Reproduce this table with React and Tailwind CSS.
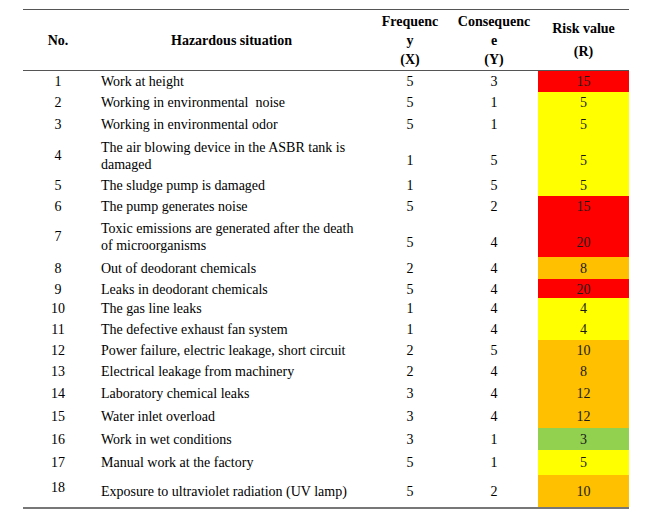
import React from 'react'

const rows = [
  { no: 1, label: ['Work at height'], x: 5, y: 3, r: 15, bg: 'bg-[#ff0000]', h: 'h-[21px]' },
  { no: 2, label: ['Working in environmental\u00a0 noise'], x: 5, y: 1, r: 5, bg: 'bg-[#ffff00]', h: 'h-[21px]' },
  { no: 3, label: ['Working in environmental odor'], x: 5, y: 1, r: 5, bg: 'bg-[#ffff00]', h: 'h-[23px]' },
  { no: 4, label: ['The air blowing device in the ASBR tank is', 'damaged'], x: 1, y: 5, r: 5, bg: 'bg-[#ffff00]', h: 'h-[39px]' },
  { no: 5, label: ['The sludge pump is damaged'], x: 1, y: 5, r: 5, bg: 'bg-[#ffff00]', h: 'h-[21px]' },
  { no: 6, label: ['The pump generates noise'], x: 5, y: 2, r: 15, bg: 'bg-[#ff0000]', h: 'h-[20px]' },
  { no: 7, label: ['Toxic emissions are generated after the death', 'of microorganisms'], x: 5, y: 4, r: 20, bg: 'bg-[#ff0000]', h: 'h-[41px]' },
  { no: 8, label: ['Out of deodorant chemicals'], x: 2, y: 4, r: 8, bg: 'bg-[#ffc000]', h: 'h-[22px]' },
  { no: 9, label: ['Leaks in deodorant chemicals'], x: 5, y: 4, r: 20, bg: 'bg-[#ff0000]', h: 'h-[19px]' },
  { no: 10, label: ['The gas line leaks'], x: 1, y: 4, r: 4, bg: 'bg-[#ffff00]', h: 'h-[21px]' },
  { no: 11, label: ['The defective exhaust fan system'], x: 1, y: 4, r: 4, bg: 'bg-[#ffff00]', h: 'h-[21px]' },
  { no: 12, label: ['Power failure, electric leakage, short circuit'], x: 2, y: 5, r: 10, bg: 'bg-[#ffc000]', h: 'h-[21px]' },
  { no: 13, label: ['Electrical leakage from machinery'], x: 2, y: 4, r: 8, bg: 'bg-[#ffc000]', h: 'h-[21px]' },
  { no: 14, label: ['Laboratory chemical leaks'], x: 3, y: 4, r: 12, bg: 'bg-[#ffc000]', h: 'h-[22px]' },
  { no: 15, label: ['Water inlet overload'], x: 3, y: 4, r: 12, bg: 'bg-[#ffc000]', h: 'h-[24px]' },
  { no: 16, label: ['Work in wet conditions'], x: 3, y: 1, r: 3, bg: 'bg-[#92d050]', h: 'h-[22px]' },
  { no: 17, label: ['Manual work at the factory'], x: 5, y: 1, r: 5, bg: 'bg-[#ffff00]', h: 'h-[25px]' },
  { no: 18, label: ['Exposure to ultraviolet radiation (UV lamp)'], x: 5, y: 2, r: 10, bg: 'bg-[#ffc000]', h: 'h-[32px]', numUp: true },
]

const cols = 'grid grid-cols-[70px_277px_80px_88px_91px]'

function Row({ row }) {
  const multi = row.label.length > 1
  const valAlign = multi ? 'items-end pb-[4px]' : 'items-center'
  return (
    <div className={`${cols} ${row.h}`}>
      <div className={`flex justify-center ${row.numUp ? 'items-center pb-[8px]' : 'items-center'}`}>{row.no}</div>
      <div className={`flex flex-col justify-center pl-[8px] ${multi ? 'leading-[17px]' : ''}`}>
        {row.label.map((l) => (
          <span key={l} className="whitespace-pre">{l}</span>
        ))}
      </div>
      <div className={`flex justify-center ${valAlign}`}>{row.x}</div>
      <div className={`flex justify-center ${valAlign}`}>{row.y}</div>
      <div className={`flex justify-center text-[#1a1a1a] ${valAlign} ${row.bg}`}>{row.r}</div>
    </div>
  )
}

export default function App() {
  return (
    <div className="w-[650px] h-[524px] bg-white pt-[9px] pl-[23px] font-[family-name:'Liberation_Serif',serif] text-[14px] text-black">
      <div className="w-[606px]">
        <div className="h-px bg-[#555]" />

        {/* header */}
        <div className={`${cols} h-[60px] font-bold`}>
          <div className="flex items-center justify-center">No.</div>
          <div className="flex items-center justify-center">Hazardous situation</div>
          <div className="flex flex-col items-center justify-center leading-[19px]">
            <span>Frequenc</span>
            <span>y</span>
            <span>(X)</span>
          </div>
          <div className="flex flex-col items-center justify-center leading-[19px]">
            <span>Consequenc</span>
            <span>e</span>
            <span>(Y)</span>
          </div>
          <div className="flex flex-col items-center justify-center leading-[23px]">
            <span>Risk value</span>
            <span>(R)</span>
          </div>
        </div>

        <div className="h-px bg-[#555]" />

        {rows.map((row) => (
          <Row key={row.no} row={row} />
        ))}

        <div className="h-[2px] bg-[#777]" />
      </div>
    </div>
  )
}
